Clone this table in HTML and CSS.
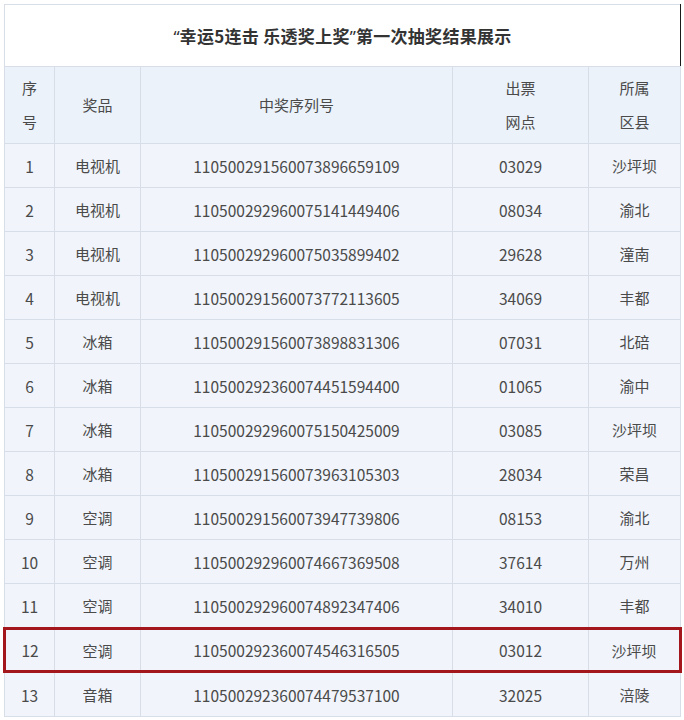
FILE: index.html
```html
<!DOCTYPE html>
<html lang="zh">
<head>
<meta charset="utf-8">
<title>抽奖结果展示</title>
<link rel="stylesheet" href="styles.css">
</head>
<body>
<table class="results">
  <colgroup>
    <col class="c-no">
    <col class="c-prize">
    <col class="c-serial">
    <col class="c-shop">
    <col class="c-area">
  </colgroup>
  <thead>
    <tr class="title-row"><th colspan="5" class="title"><span class="q">“</span>幸运5连击 乐透奖上奖<span class="q">”</span>第一次抽奖结果展示</th></tr>
    <tr class="head-row">
      <th>序<br>号</th>
      <th>奖品</th>
      <th>中奖序列号</th>
      <th>出票<br>网点</th>
      <th>所属<br>区县</th>
    </tr>
  </thead>
  <tbody>
    <tr><td>1</td><td>电视机</td><td>110500291560073896659109</td><td>03029</td><td>沙坪坝</td></tr>
    <tr><td>2</td><td>电视机</td><td>110500292960075141449406</td><td>08034</td><td>渝北</td></tr>
    <tr><td>3</td><td>电视机</td><td>110500292960075035899402</td><td>29628</td><td>潼南</td></tr>
    <tr><td>4</td><td>电视机</td><td>110500291560073772113605</td><td>34069</td><td>丰都</td></tr>
    <tr><td>5</td><td>冰箱</td><td>110500291560073898831306</td><td>07031</td><td>北碚</td></tr>
    <tr><td>6</td><td>冰箱</td><td>110500292360074451594400</td><td>01065</td><td>渝中</td></tr>
    <tr><td>7</td><td>冰箱</td><td>110500292960075150425009</td><td>03085</td><td>沙坪坝</td></tr>
    <tr><td>8</td><td>冰箱</td><td>110500291560073963105303</td><td>28034</td><td>荣昌</td></tr>
    <tr><td>9</td><td>空调</td><td>110500291560073947739806</td><td>08153</td><td>渝北</td></tr>
    <tr><td>10</td><td>空调</td><td>110500292960074667369508</td><td>37614</td><td>万州</td></tr>
    <tr><td>11</td><td>空调</td><td>110500292960074892347406</td><td>34010</td><td>丰都</td></tr>
    <tr class="hl"><td>12</td><td>空调</td><td>110500292360074546316505</td><td>03012</td><td>沙坪坝</td></tr>
    <tr><td>13</td><td>音箱</td><td>110500292360074479537100</td><td>32025</td><td>涪陵</td></tr>
  </tbody>
</table>
</body>
</html>
```
FILE: styles.css
```css
html, body {
  margin: 0;
  padding: 0;
  background: #ffffff;
}
body {
  padding: 4px 0 0 3px;
  font-family: "Noto Sans CJK SC", "Noto Sans", sans-serif;
  color: #4a4a4a;
}
.results {
  border-collapse: collapse;
  table-layout: fixed;
  width: 676px;
}
.c-no { width: 50px; }
.c-prize { width: 86px; }
.c-serial { width: 312px; }
.c-shop { width: 136px; }
.c-area { width: 92px; }

.results th,
.results td {
  border: 1px solid #d8dee8;
  text-align: center;
  padding: 0;
  font-weight: normal;
}
.title-row .title {
  height: 61px;
  background: #ffffff;
  font-size: 17px;
  font-weight: bold;
  color: #333333;
  border-right: 1px solid #1a1a1a;
  letter-spacing: 0.3px;
}
.title .q {
  font-family: "Noto Sans", "Liberation Sans", sans-serif;
  font-weight: normal;
  letter-spacing: 0;
}
.head-row th {
  height: 76px;
  background: #ebf2fa;
  font-size: 15px;
  line-height: 34px;
  color: #4a4a4a;
}
.results td {
  height: 43px;
  background: #f1f5fb;
  font-size: 15px;
  color: #4a4a4a;
}
.results td:nth-child(3),
.results td:nth-child(4),
.results td:first-child {
  font-size: 15.5px;
}
.results tr.hl td {
  height: 40px;
  border-top: 3px solid #a3161c;
  border-bottom: 3px solid #a3161c;
}
.results tr.hl td:first-child {
  border-left: 3px solid #a3161c;
}
.results tr.hl td:last-child {
  border-right: 3px solid #a3161c;
}
```
